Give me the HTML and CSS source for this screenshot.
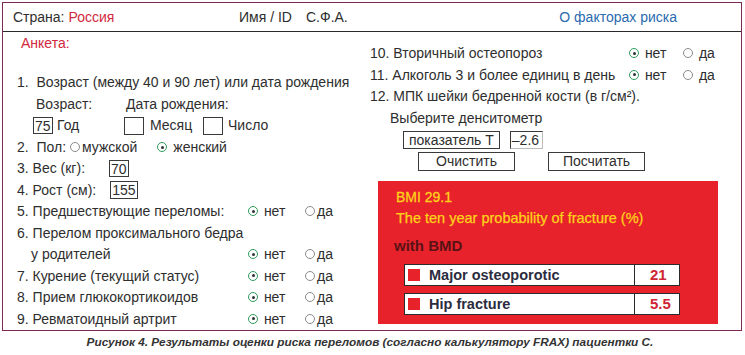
FILE: index.html
```html
<!DOCTYPE html>
<html lang="ru">
<head>
<meta charset="utf-8">
<link rel="stylesheet" href="styles.css">
</head>
<body>
<div class="frame">
  <div class="header">
    <div class="country">Страна: <span class="red">Россия</span></div>
    <div class="name">Имя / ID</div>
    <div class="fio">С.Ф.А.</div>
    <div class="about">О факторах риска</div>
  </div>
  <div class="body">
    <div class="left">
      <div class="anketa">Анкета:</div>
      <div class="row">1.&nbsp; Возраст (между 40 и 90 лет) или дата рождения</div>
      <div class="row sub"><span class="age-lbl">Возраст:</span><span>Дата рождения:</span></div>
      <div class="row sub2"><span class="box">75</span><span class="w-god">Год</span><span class="box empty"></span><span class="w-month">Месяц</span><span class="box empty"></span><span class="w-day">Число</span></div>
      <div class="row"><span class="pol">2.&nbsp; Пол:</span><span class="radio"></span><span>мужской</span><span class="radio on gap-f"></span><span class="fem">женский</span></div>
      <div class="row">3. Вес (кг):<span class="box val-w">70</span></div>
      <div class="row">4. Рост (см):<span class="box val-h">155</span></div>
      <div class="row opt"><span class="lbl">5. Предшествующие переломы:</span><span class="o-no"><span class="radio on"></span> нет</span><span><span class="radio"></span>да</span></div>
      <div class="row">6. Перелом проксимального бедра</div>
      <div class="row opt"><span class="lbl ind">у родителей</span><span class="o-no"><span class="radio on"></span> нет</span><span><span class="radio"></span>да</span></div>
      <div class="row opt"><span class="lbl">7. Курение (текущий статус)</span><span class="o-no"><span class="radio on"></span> нет</span><span><span class="radio"></span>да</span></div>
      <div class="row opt"><span class="lbl">8. Прием глюкокортикоидов</span><span class="o-no"><span class="radio on"></span> нет</span><span><span class="radio"></span>да</span></div>
      <div class="row opt"><span class="lbl">9. Ревматоидный артрит</span><span class="o-no"><span class="radio on"></span> нет</span><span><span class="radio"></span>да</span></div>
    </div>
    <div class="right">
      <div class="row opt"><span class="lbl r">10. Вторичный остеопороз</span><span class="o-no r"><span class="radio on"></span> нет</span><span><span class="radio"></span> да</span></div>
      <div class="row opt"><span class="lbl r">11. Алкоголь 3 и более единиц в день</span><span class="o-no r"><span class="radio on"></span> нет</span><span><span class="radio"></span> да</span></div>
      <div class="row">12. МПК шейки бедренной кости (в г/см²).</div>
      <div class="row dens">Выберите денситометр</div>
      <div class="row tline"><span class="tbox">показатель Т</span><span class="tval">–2.6</span></div>
      <div class="row btns"><span class="btn">Очистить</span><span class="btn">Посчитать</span></div>
      <div class="result">
        <div class="bmi">BMI 29.1</div>
        <div class="prob">The ten year probability of fracture (%)</div>
        <div class="withbmd">with BMD</div>
        <div class="res-row"><span class="sq"></span><span class="res-name">Major osteoporotic</span><span class="res-val">21</span></div>
        <div class="res-row"><span class="sq"></span><span class="res-name">Hip fracture</span><span class="res-val">5.5</span></div>
      </div>
    </div>
  </div>
</div>
<p class="caption">Рисунок 4. Результаты оценки риска переломов (согласно калькулятору FRAX) пациентки С.</p>
</body>
</html>
```
FILE: styles.css
```css
* { box-sizing: border-box; }
html, body { margin: 0; padding: 0; background: #fff; }
body {
  font-family: "Liberation Sans", Arial, sans-serif;
  font-size: 14px;
  color: #2e2e2e;
  padding: 2px 0 0 2px;
  width: 745px;
  height: 355px;
  overflow: hidden;
}
.frame {
  width: 740px;
  height: 329px;
  border: 1.5px solid #7e2a55;
}
.header {
  display: flex;
  align-items: center;
  height: 29px;
  border-bottom: 1px solid #2a2a2a;
  padding: 0 64px 0 10px;
}
.country { width: 226px; }
.red { color: #d1283e; }
.name { width: 67px; }
.about { margin-left: auto; color: #2a6aae; }
.body {
  display: grid;
  grid-template-columns: 367px 1fr;
}
.left { padding: 1px 0 0 14px; }
.right { padding: 11px 0 0 0; }
.row {
  height: 21.5px;
  line-height: 21.5px;
  white-space: nowrap;
  display: flex;
  align-items: center;
}
.anketa { color: #d1283e; padding-left: 4px; height: 21.5px; line-height: 21.5px; margin-bottom: 17.5px; }
.sub { padding-left: 19px; }
.age-lbl { width: 90px; }
.sub2 { padding-left: 16px; }
.box {
  display: inline-block;
  height: 17px;
  line-height: 16px;
  border: 1px solid #3a3a3a;
  padding: 0 1px;
  min-width: 20px;
}
.box.empty { width: 20px; height: 18px; }
.w-god { margin-left: 4px; width: 67px; }
.w-month { margin-left: 6px; width: 53px; }
.w-day { margin-left: 5px; }
.pol { margin-right: 4px; }
.fem { margin-left: 4px; }
.val-w { margin-left: 24px; }
.val-h { margin-left: 14px; height: 18px; }
.radio {
  display: inline-block;
  width: 10px;
  height: 10px;
  border: 1px solid #8a8a8a;
  border-radius: 50%;
  margin-right: 2px;
  position: relative;
}
.radio.on { border-color: #2f9a5c; }
.radio.on::after {
  content: "";
  position: absolute;
  left: 2.5px; top: 2.5px;
  width: 3px; height: 3px;
  border-radius: 50%;
  background: #333;
}
.gap-f { margin-left: 20px; }
.lbl { width: 231px; }
.lbl.ind { padding-left: 14px; }
.o-no { width: 57px; }
.lbl.r { width: 259px; }
.o-no.r { width: 54px; }
.dens { padding-left: 20px; }
.tline { padding-left: 33px; }
.tbox {
  display: inline-block;
  height: 18px;
  line-height: 16px;
  border: 1px solid #3a3a3a;
  padding: 0 5px;
}
.tval {
  display: inline-block;
  height: 18px;
  line-height: 16px;
  border: 1px solid #3a3a3a;
  border-right-color: #bbb;
  border-bottom-color: #bbb;
  margin-left: 10px;
  padding: 0 3px 0 1px;
}
.btns { padding-left: 48px; }
.btn {
  display: inline-block;
  width: 97px;
  height: 19px;
  line-height: 17px;
  border: 1px solid #3a3a3a;
  text-align: center;
  margin-right: 33px;
}
.result {
  margin: 9px 0 0 8px;
  width: 340px;
  height: 143px;
  background: #e8222b;
  padding: 6px 0 0 18px;
}
.bmi { color: #ffd21a; font-size: 14px; height: 21px; line-height: 21px; -webkit-text-stroke: 0.3px #ffd21a; }
.prob { color: #ffd21a; font-size: 14.5px; height: 20px; line-height: 20px; -webkit-text-stroke: 0.25px #ffd21a; }
.withbmd { color: #5a1216; font-size: 15px; font-weight: bold; height: 36px; line-height: 36px; margin-left: -2px; }
.res-row {
  display: flex;
  align-items: center;
  width: 276px;
  height: 22px;
  margin: 0 0 7px 8px;
  background: #fff;
  border: 1.5px solid #2b2b2b;
}
.sq { width: 12px; height: 12px; background: #e8222b; margin: 0 9px 0 3px; }
.res-name { flex: 1; font-weight: bold; font-size: 14.5px; color: #2b2c3e; }
.res-val {
  width: 45px;
  height: 100%;
  border-left: 1.5px solid #2b2b2b;
  font-weight: bold;
  font-size: 15px;
  color: #cf2535;
  padding-left: 15px;
  line-height: 19px;
}
.caption {
  margin: 4px 0 0 0;
  width: 740px;
  text-align: center;
  font-weight: bold;
  font-style: italic;
  font-size: 11.8px;
  color: #333;
  padding-right: 4px;
}
```
